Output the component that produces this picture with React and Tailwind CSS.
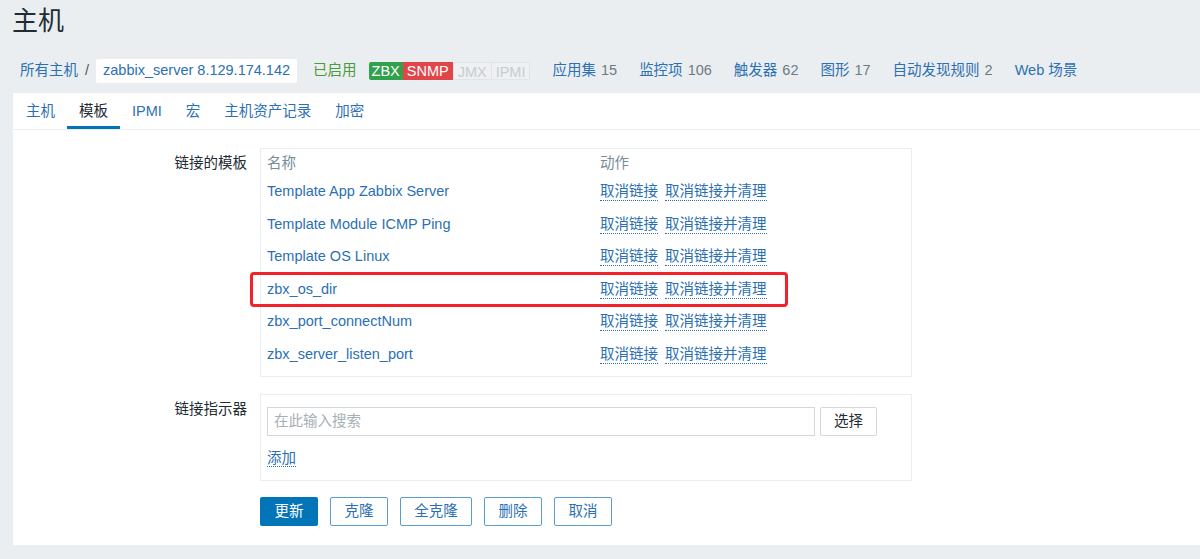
import React from "react";

const font = { fontFamily: '"Liberation Sans", Arial, "Noto Sans CJK SC", sans-serif' };

const templates = [
  "Template App Zabbix Server",
  "Template Module ICMP Ping",
  "Template OS Linux",
  "zbx_os_dir",
  "zbx_port_connectNum",
  "zbx_server_listen_port",
];

const counts = [
  { label: "应用集", n: "15" },
  { label: "监控项", n: "106" },
  { label: "触发器", n: "62" },
  { label: "图形", n: "17" },
  { label: "自动发现规则", n: "2" },
  { label: "Web 场景", n: "" },
];

const tabs = ["主机", "模板", "IPMI", "宏", "主机资产记录", "加密"];

function DottedLink({ children }) {
  return (
    <span className="text-[#2b70b3] border-b border-dotted border-[#2b70b3] leading-[17px] cursor-pointer">
      {children}
    </span>
  );
}

export default function App() {
  return (
    <div className="w-[1200px] h-[559px] bg-[#ebeef0] overflow-hidden text-[14.5px] text-[#1f2c33]" style={font}>
      {/* 标题 */}
      <h1 className="text-[26px] leading-none pl-[12px] pt-[8px] h-[48px] text-[#1f2c33]">主机</h1>

      {/* 面包屑 + 计数 */}
      <div className="flex items-center h-[45px] pl-[20px]">
        <span className="text-[#2b70b3]">所有主机</span>
        <span className="mx-[7px] text-[#555]">/</span>
        <span className="bg-white text-[#2b70b3] px-[7px] h-[24px] flex items-center rounded-[2px]">zabbix_server 8.129.174.142</span>
        <span className="ml-[16px] text-[#4a9a3c]">已启用</span>
        <div className="flex ml-[12px] text-[14.5px] leading-[18px] h-[18px]">
          <span className="bg-[#31a24c] text-white px-[3px] rounded-l-[2px]">ZBX</span>
          <span className="bg-[#e0454a] text-white px-[4px]">SNMP</span>
          <span className="text-[#c6cdd1] px-[4px] border border-[#e0e4e6] bg-[#eef0f2]">JMX</span>
          <span className="text-[#c6cdd1] px-[4px] border border-l-0 border-[#e0e4e6] bg-[#eef0f2] rounded-r-[2px]">IPMI</span>
        </div>
        <div className="flex ml-[22px] gap-[22px]">
          {counts.map((c) => (
            <span key={c.label} className="text-[#2b70b3]">
              {c.label}
              {c.n && <span className="text-[#6b7b84] ml-[5px]">{c.n}</span>}
            </span>
          ))}
        </div>
      </div>

      {/* 主面板 */}
      <div className="ml-[13px] bg-white h-[452px]">
        <div className="flex h-[37px] border-b border-[#ebeef0] pl-[13px] gap-[24px]">
          {tabs.map((t, i) => (
            <div
              key={t}
              className={
                "flex items-center h-full pt-[2px] " +
                (i === 1
                  ? "text-[#1f2c33] border-b-[3px] border-[#0275b8] px-[12px] -mx-[12px] pt-[4px]"
                  : "text-[#2b70b3]")
              }
            >
              {t}
            </div>
          ))}
        </div>

        {/* 链接的模板 */}
        <div className="flex mt-[18px]">
          <div className="w-[247px] text-right pr-[13px] pt-[5px]">链接的模板</div>
          <div className="w-[652px] border border-[#ebeef0] pl-[6px] pt-[3px] pb-[5px]">
            <div className="flex h-[24px] items-center text-[#768d99]">
              <div className="w-[333px]">名称</div>
              <div>动作</div>
            </div>
            {templates.map((t) => (
              <div key={t} className="relative flex h-[32.5px] items-center">
                {t === "zbx_os_dir" && (
                  <div className="absolute left-[-17px] top-[-2px] w-[538px] h-[35px] border-[3px] border-[#f2212a] rounded-[4px]" />
                )}
                <div className="w-[333px] text-[#2b70b3]">{t}</div>
                <div className="flex gap-[7px]">
                  <DottedLink>取消链接</DottedLink>
                  <DottedLink>取消链接并清理</DottedLink>
                </div>
              </div>
            ))}
          </div>
        </div>

        {/* 链接指示器 */}
        <div className="flex mt-[17px]">
          <div className="w-[247px] text-right pr-[13px] pt-[5px]">链接指示器</div>
          <div className="w-[652px] h-[87px] border border-[#ebeef0] pl-[6px] pt-[12px]">
            <div className="flex gap-[5px]">
              <div className="w-[548px] h-[29px] border border-[#d3d8dc] flex items-center px-[6px] text-[#a5b0b6]">
                在此输入搜索
              </div>
              <button className="w-[57px] h-[29px] border border-[#d3d8dc] rounded-[2px] text-[#1f2c33] bg-white">
                选择
              </button>
            </div>
            <div className="mt-[12px]">
              <DottedLink>添加</DottedLink>
            </div>
          </div>
        </div>

        {/* 按钮 */}
        <div className="flex ml-[247px] mt-[16px] gap-[12px]">
          <button className="w-[58px] h-[29px] bg-[#0275b8] text-white rounded-[2px]">更新</button>
          <button className="w-[58px] h-[29px] border border-[#5a9bd0] text-[#2b70b3] rounded-[2px] bg-white">克隆</button>
          <button className="w-[72px] h-[29px] border border-[#5a9bd0] text-[#2b70b3] rounded-[2px] bg-white">全克隆</button>
          <button className="w-[58px] h-[29px] border border-[#5a9bd0] text-[#2b70b3] rounded-[2px] bg-white">删除</button>
          <button className="w-[58px] h-[29px] border border-[#5a9bd0] text-[#2b70b3] rounded-[2px] bg-white">取消</button>
        </div>
      </div>
    </div>
  );
}
